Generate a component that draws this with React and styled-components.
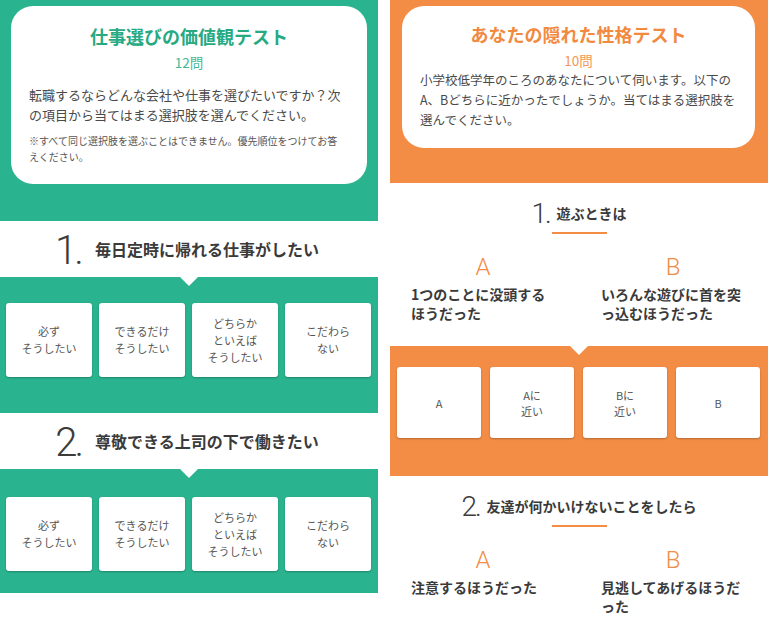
import React from "react";
import styled, { createGlobalStyle } from "styled-components";

const GREEN = "#2ab38f";
const ORANGE = "#f38c45";

const tests = [
  {
    key: "work",
    color: GREEN,
    titleColor: "#27a982",
    title: "仕事選びの価値観テスト",
    count: "12問",
    body: ["転職するならどんな会社や仕事を選びたいですか？次", "の項目から当てはまる選択肢を選んでください。"],
    note: ["※すべて同じ選択肢を選ぶことはできません。優先順位をつけてお答", "えください。"],
  },
  {
    key: "self",
    color: ORANGE,
    titleColor: "#f18a3f",
    title: "あなたの隠れた性格テスト",
    count: "10問",
    body: [
      "小学校低学年のころのあなたについて伺います。以下の",
      "A、Bどちらに近かったでしょうか。当てはまる選択肢を",
      "選んでください。",
    ],
  },
];

const workChoices = [["必ず", "そうしたい"], ["できるだけ", "そうしたい"], ["どちらか", "といえば", "そうしたい"], ["こだわら", "ない"]];
const abChoices = [["A"], ["Aに", "近い"], ["Bに", "近い"], ["B"]];

const workQuestions = [
  { no: "1.", text: "毎日定時に帰れる仕事がしたい", pt: 26, pb: 36 },
  { no: "2.", text: "尊敬できる上司の下で働きたい", pt: 28, pb: 22 },
];

const selfQuestions = [
  { no: "1.", text: "遊ぶときは", a: ["1つのことに没頭する", "ほうだった"], b: ["いろんな遊びに首を突", "っ込むほうだった"] },
  { no: "2.", text: "友達が何かいけないことをしたら", a: ["注意するほうだった"], b: ["見逃してあげるほうだ", "った"] },
];

const Lines = ({ lines }) =>
  lines.map((l, i) => (
    <React.Fragment key={i}>
      {i > 0 && <br />}
      {l}
    </React.Fragment>
  ));

const App = () => {
  const [work, self] = tests;
  return (
    <>
      <GlobalStyle />
      <Page>
        <Panel>
          <Header $color={work.color} $pad="6px 11px 37px">
            <IntroCard $pad="18px 18px 19px">
              <IntroTitle $color={work.titleColor}>{work.title}</IntroTitle>
              <Count $color={work.color}>{work.count}</Count>
              <Body $size={13} $mt={14}>
                <Lines lines={work.body} />
              </Body>
              <Note>
                <Lines lines={work.note} />
              </Note>
            </IntroCard>
          </Header>
          {workQuestions.map((q) => (
            <React.Fragment key={q.no}>
              <QHead>
                <Num $size={40}>{q.no}</Num>
                <QTitle $size={16}>{q.text}</QTitle>
              </QHead>
              <Band $color={work.color} $pad={`${q.pt}px 7px ${q.pb}px 6px`}>
                <Choices $w={86} $gap={7}>
                  {workChoices.map((c, i) => (
                    <Choice key={i} $h={74}>
                      <Lines lines={c} />
                    </Choice>
                  ))}
                </Choices>
              </Band>
            </React.Fragment>
          ))}
        </Panel>

        <Panel>
          <Header $color={self.color} $pad="6px 13px 35px 12px">
            <IntroCard $pad="16px 18px 18px">
              <IntroTitle $color={self.titleColor}>{self.title}</IntroTitle>
              <Count $color={self.color}>{self.count}</Count>
              <Body $size={12.5} $mt={1}>
                <Lines lines={self.body} />
              </Body>
            </IntroCard>
          </Header>
          {selfQuestions.map((q, qi) => (
            <React.Fragment key={q.no}>
              <QBlock>
                <TitleRow>
                  <Num $size={28}>{q.no}</Num>
                  <QTitle $size={14}>{q.text}</QTitle>
                </TitleRow>
                <Underline />
                <ABGrid>
                  <ABCol>
                    <Letter>A</Letter>
                    <ABText>
                      <Lines lines={q.a} />
                    </ABText>
                  </ABCol>
                  <ABCol>
                    <Letter>B</Letter>
                    <ABText>
                      <Lines lines={q.b} />
                    </ABText>
                  </ABCol>
                </ABGrid>
              </QBlock>
              {qi === 0 && (
                <Band $color={self.color} $pad="21px 9px 38px 7px">
                  <Choices $w={84} $gap={9}>
                    {abChoices.map((c, i) => (
                      <Choice key={i} $h={71} $lh={16}>
                        <Lines lines={c} />
                      </Choice>
                    ))}
                  </Choices>
                </Band>
              )}
            </React.Fragment>
          ))}
        </Panel>
      </Page>
    </>
  );
};

const GlobalStyle = createGlobalStyle`
  html, body {
    margin: 0;
    background: #fff;
  }
  body {
    font-family: "Noto Sans CJK JP", "Noto Sans", sans-serif;
    color: #444;
  }
`;

const Page = styled.div`
  display: grid;
  grid-template-columns: 378px 378px;
  column-gap: 12px;
  width: 768px;
  height: 631px;
  overflow: hidden;
`;

const Panel = styled.div`
  display: flex;
  flex-direction: column;
`;

const Header = styled.div`
  background: ${(p) => p.$color};
  padding: ${(p) => p.$pad};
`;

const IntroCard = styled.div`
  background: #fff;
  border-radius: 22px;
  padding: ${(p) => p.$pad};
  text-align: center;
`;

const IntroTitle = styled.div`
  color: ${(p) => p.$color};
  font-size: 18px;
  font-weight: 700;
  line-height: 24px;
`;

const Count = styled.div`
  color: ${(p) => p.$color};
  font-size: 13.5px;
  line-height: 18px;
  margin-top: 5px;
  opacity: 0.9;
`;

const Body = styled.p`
  margin: ${(p) => p.$mt}px 0 0;
  text-align: left;
  font-size: ${(p) => p.$size}px;
  line-height: 20px;
  color: #4a4a4a;
  white-space: nowrap;
`;

const Note = styled.p`
  margin: 8px 0 0;
  text-align: left;
  font-size: 10px;
  line-height: 16px;
  color: #555;
  white-space: nowrap;
`;

const QHead = styled.div`
  height: 56px;
  display: flex;
  align-items: center;
  justify-content: center;
  gap: 14px;
  padding-right: 4px;
`;

const Num = styled.span`
  font-family: Roboto, "Liberation Sans", sans-serif;
  font-weight: 300;
  font-size: ${(p) => p.$size}px;
  line-height: 1;
  color: #3c3c3c;
  letter-spacing: ${(p) => -Math.round(p.$size / 16)}px;
  padding-top: ${(p) => p.$size / 10}px;
`;

const QTitle = styled.span`
  font-size: ${(p) => p.$size}px;
  font-weight: 700;
  color: #3a3a3a;
  line-height: 24px;
`;

const Band = styled.div`
  position: relative;
  background: ${(p) => p.$color};
  padding: ${(p) => p.$pad};

  &::before {
    content: "";
    position: absolute;
    top: 0;
    left: 50%;
    transform: translateX(-50%);
    border-left: 9px solid transparent;
    border-right: 9px solid transparent;
    border-top: 9px solid #fff;
  }
`;

const Choices = styled.div`
  display: grid;
  grid-template-columns: repeat(4, ${(p) => p.$w}px);
  column-gap: ${(p) => p.$gap}px;
`;

const Choice = styled.div`
  height: ${(p) => p.$h}px;
  background: #fff;
  border-radius: 3px;
  box-shadow: 0 1px 2px rgba(0, 0, 0, 0.25);
  display: flex;
  align-items: center;
  justify-content: center;
  text-align: center;
  font-size: 11px;
  line-height: ${(p) => p.$lh || 17}px;
  color: #555;
`;

const QBlock = styled.div`
  padding: 18px 0 23px;
`;

const TitleRow = styled.div`
  height: 24px;
  display: flex;
  align-items: center;
  justify-content: center;
  gap: 7px;
`;

const Underline = styled.div`
  width: 55px;
  height: 2px;
  background: ${ORANGE};
  margin: 7px auto 0;
`;

const ABGrid = styled.div`
  display: grid;
  grid-template-columns: 144px 144px;
  column-gap: 46px;
  padding-left: 21px;
  margin-top: 20px;
`;

const ABCol = styled.div`
  display: flex;
  flex-direction: column;
`;

const Letter = styled.div`
  font-family: Roboto, "Liberation Sans", sans-serif;
  font-weight: 300;
  font-size: 24px;
  line-height: 26px;
  color: ${ORANGE};
  text-align: center;
`;

const ABText = styled.div`
  margin-top: 5px;
  font-size: 14px;
  font-weight: 700;
  line-height: 19px;
  color: #3a3a3a;
  white-space: nowrap;
`;

export default App;
